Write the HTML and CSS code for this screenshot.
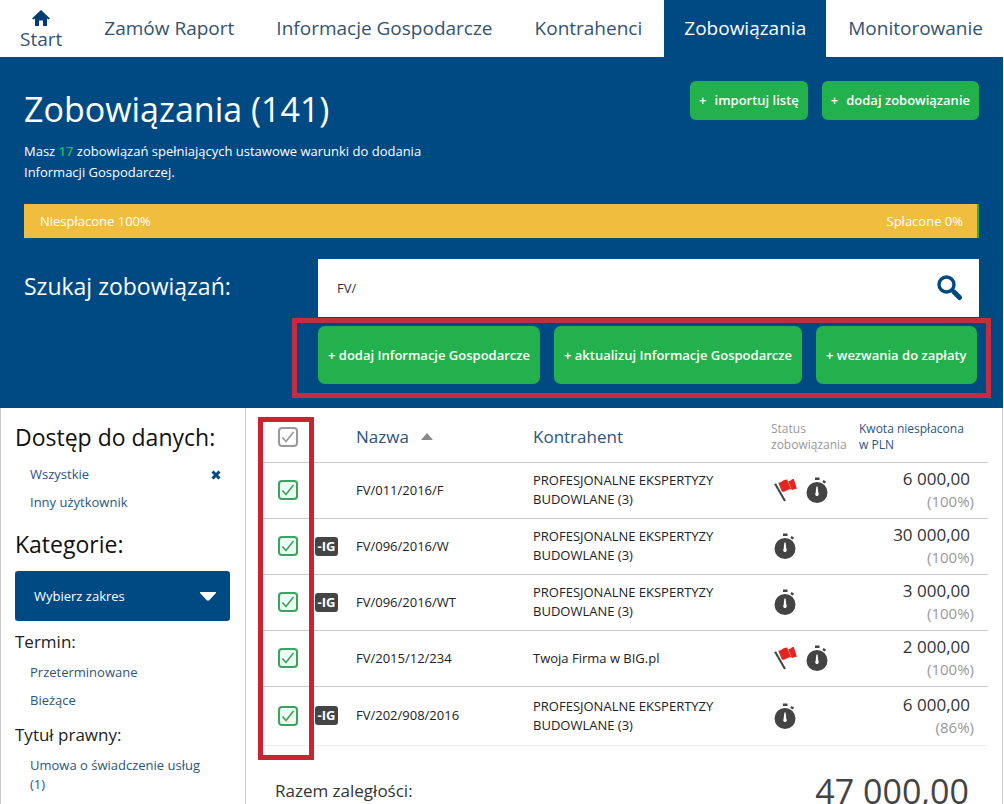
FILE: index.html
```html
<!DOCTYPE html>
<html lang="pl">
<head>
<meta charset="utf-8">
<title>Zobowiązania</title>
<link rel="stylesheet" href="styles.css">
</head>
<body>
<svg class="defs" aria-hidden="true">
  <symbol id="tick" viewBox="0 0 20 20"><path d="M4.5 10.5 8 14.5 15.5 5" fill="none" stroke="currentColor" stroke-width="1.7"/></symbol>
  <symbol id="flag" viewBox="0 0 22 24"><path d="M1 5.500 10.500 22" fill="none" stroke="#444" stroke-width="2"/><path d="M4 4.500C7 5 8 1.500 12.500 1.500L16.500 11C12.500 10 11 14.500 7.500 13Z" fill="#e0261f"/><path d="M13.500 3C16 3.500 17 .5 19 1L22 10.500C20 9.500 18.500 12 16.800 11.300Z" fill="#e0261f"/></symbol>
  <symbol id="watch" viewBox="0 0 22 28"><circle cx="11" cy="16.500" r="10.500" fill="#444"/><path d="M9 1.500h4.500v2.500H9z" fill="#444"/><path d="M17.500 4l2.500 1.500-1.200 2-2.500-1.600z" fill="#444"/><path d="M10.400 10.500h1.200l.8 6.500a1.800 1.800 0 1 1-2.800 0z" fill="#fff"/></symbol>
</svg>
<div class="page">
  <nav class="nav">
    <a class="nav-item home" href="#"><svg width="18" height="17" viewBox="0 0 18 17" aria-hidden="true"><path d="M9 0 18 8.500 16.500 9.500 15 8.500V16H11V10.500H7V16H3V8.500L1.500 9.500 0 8.500Z" fill="#003d73"/></svg><span>Start</span></a>
    <a class="nav-item" href="#">Zamów Raport</a>
    <a class="nav-item" href="#">Informacje Gospodarcze</a>
    <a class="nav-item" href="#">Kontrahenci</a>
    <a class="nav-item active" href="#">Zobowiązania</a>
    <a class="nav-item" href="#">Monitorowanie</a>
  </nav>
  <header class="hero">
    <div class="hero-top">
      <div>
        <h1>Zobowiązania (141)</h1>
        <p class="intro">Masz <b>17</b> zobowiązań spełniających ustawowe warunki do dodania Informacji Gospodarczej.</p>
      </div>
      <div class="hero-actions">
        <button class="btn" type="button"><span>+</span><span>importuj listę</span></button>
        <button class="btn" type="button"><span>+</span><span>dodaj zobowiązanie</span></button>
      </div>
    </div>
    <div class="progress"><span>Niespłacone 100%</span><span>Spłacone 0%</span></div>
    <div class="search">
      <label for="q">Szukaj zobowiązań:</label>
      <div class="search-main">
        <div class="search-box">
          <input id="q" type="text" value="FV/">
          <button class="search-btn" type="button" aria-label="Szukaj"><svg width="26" height="26" viewBox="0 0 26 26" aria-hidden="true"><circle cx="9.500" cy="9.500" r="7.500" fill="none" stroke="#004a80" stroke-width="3.400"/><path d="M14.500 15 16 16.500" stroke="#004a80" stroke-width="3"/><path d="M17 17 22.500 22.500" stroke="#004a80" stroke-width="5" stroke-linecap="round"/></svg></button>
        </div>
        <div class="bulk">
          <button class="btn tall" type="button">+ dodaj Informacje Gospodarcze</button>
          <button class="btn tall" type="button">+ aktualizuj Informacje Gospodarcze</button>
          <button class="btn tall" type="button">+ wezwania do zapłaty</button>
          <div class="mark mark-bulk"></div>
        </div>
      </div>
    </div>
  </header>
  <div class="body">
    <aside class="side">
      <h2>Dostęp do danych:</h2>
      <ul>
        <li><a href="#">Wszystkie</a><button class="clear" type="button" aria-label="Usuń"><svg width="10" height="10" viewBox="0 0 10 10" aria-hidden="true"><path d="M1.500 1.500 8.500 8.500M8.500 1.500 1.500 8.500" stroke="#004a80" stroke-width="3"/></svg></button></li>
        <li><a href="#">Inny użytkownik</a></li>
      </ul>
      <h2>Kategorie:</h2>
      <button class="range" type="button"><span>Wybierz zakres</span><svg width="16" height="9" viewBox="0 0 16 9" aria-hidden="true"><path d="M0 0H16V1L9 8.500H7L0 1Z" fill="#fff"/></svg></button>
      <h3>Termin:</h3>
      <ul>
        <li><a href="#">Przeterminowane</a></li>
        <li><a href="#">Bieżące</a></li>
      </ul>
      <h3>Tytuł prawny:</h3>
      <ul>
        <li><a href="#">Umowa o świadczenie usług (1)</a></li>
      </ul>
    </aside>
    <main class="main">
      <div class="mark mark-checks"></div>
      <table>
        <colgroup><col class="c-check"><col class="c-ig"><col class="c-name"><col><col class="c-status"><col class="c-sum"></colgroup>
        <thead><tr>
          <th><label class="check all"><input type="checkbox" checked aria-label="Zaznacz wszystkie"><svg><use href="#tick"/></svg></label></th>
          <th></th>
          <th class="big">Nazwa <svg class="sort" width="12" height="7" viewBox="0 0 12 7" aria-hidden="true"><path d="M0 7 6 0 12 7Z" fill="#888"/></svg></th>
          <th class="big">Kontrahent</th>
          <th class="muted">Status zobowiązania</th>
          <th class="sum-head">Kwota niespłacona w&nbsp;PLN</th>
        </tr></thead>
        <tbody>
          <tr><td><label class="check"><input type="checkbox" checked aria-label="FV/011/2016/F"><svg><use href="#tick"/></svg></label></td><td></td><td>FV/011/2016/F</td><td>PROFESJONALNE EKSPERTYZY<br>BUDOWLANE (3)</td><td><div class="icons"><svg class="flag"><use href="#flag"/></svg><svg class="watch"><use href="#watch"/></svg></div></td><td class="sum"><b>6 000,00</b><span>(100%)</span></td></tr>
          <tr><td><label class="check"><input type="checkbox" checked aria-label="FV/096/2016/W"><svg><use href="#tick"/></svg></label></td><td><span class="ig">-IG</span></td><td>FV/096/2016/W</td><td>PROFESJONALNE EKSPERTYZY<br>BUDOWLANE (3)</td><td><div class="icons"><svg class="watch"><use href="#watch"/></svg></div></td><td class="sum"><b>30 000,00</b><span>(100%)</span></td></tr>
          <tr><td><label class="check"><input type="checkbox" checked aria-label="FV/096/2016/WT"><svg><use href="#tick"/></svg></label></td><td><span class="ig">-IG</span></td><td>FV/096/2016/WT</td><td>PROFESJONALNE EKSPERTYZY<br>BUDOWLANE (3)</td><td><div class="icons"><svg class="watch"><use href="#watch"/></svg></div></td><td class="sum"><b>3 000,00</b><span>(100%)</span></td></tr>
          <tr><td><label class="check"><input type="checkbox" checked aria-label="FV/2015/12/234"><svg><use href="#tick"/></svg></label></td><td></td><td>FV/2015/12/234</td><td>Twoja Firma w BIG.pl</td><td><div class="icons"><svg class="flag"><use href="#flag"/></svg><svg class="watch"><use href="#watch"/></svg></div></td><td class="sum"><b>2 000,00</b><span>(100%)</span></td></tr>
          <tr><td><label class="check"><input type="checkbox" checked aria-label="FV/202/908/2016"><svg><use href="#tick"/></svg></label></td><td><span class="ig">-IG</span></td><td>FV/202/908/2016</td><td>PROFESJONALNE EKSPERTYZY<br>BUDOWLANE (3)</td><td><div class="icons"><svg class="watch"><use href="#watch"/></svg></div></td><td class="sum"><b>6 000,00</b><span>(86%)</span></td></tr>
        </tbody>
      </table>
      <div class="total"><span>Razem zaległości:</span><strong>47 000,00</strong></div>
    </main>
  </div>
</div>
</body>
</html>
```
FILE: styles.css
```css
* { box-sizing: border-box; }
body { margin: 0; background: #fff; color: #333; font: 13px/19px "Open Sans", "Noto Sans", sans-serif; }
a { color: #2b5580; text-decoration: none; }
button, input { font: inherit; margin: 0; }
button { border: 0; cursor: pointer; }
h1, h2, h3, p, ul { margin: 0; padding: 0; font-weight: 400; }
ul { list-style: none; }
.defs { display: none; }
.page { margin-right: 1px; }

.nav { display: flex; justify-content: space-between; height: 57px; }
.nav-item { display: flex; align-items: center; padding: 0 20px 2px; font-size: 19px; line-height: 24px; color: #33536f; }
.nav-item.home { flex-direction: column; justify-content: center; padding: 3px 20px 0; }
.nav-item.active { background: #004a84; color: #fff; }

.hero { background: #004a84; color: #fff; padding: 24px; }
.hero-top { display: flex; justify-content: space-between; align-items: flex-start; }
h1 { font-size: 34px; line-height: 56px; }
.intro { max-width: 440px; margin-top: 4px; line-height: 21px; }
.intro b { color: #2cb34a; font-weight: 600; }
.hero-actions { display: flex; gap: 14px; }
.btn { background: #22b14c; color: #fff; border-radius: 6px; padding: 0 9px; height: 39px; display: flex; align-items: center; justify-content: center; gap: 8px; white-space: nowrap; font-weight: 600; }
.btn.tall { height: 58px; padding: 0 10px; border-radius: 7px; }
.progress { display: flex; justify-content: space-between; align-items: center; height: 34px; margin-top: 21px; padding: 0 14px 0 16px; background: #f0bd3f; border-right: 2px solid #22b14c; }
.search { display: flex; margin-top: 21px; }
.search label { width: 294px; flex: none; font-size: 23px; line-height: 54px; }
.search-main { flex: 1; }
.search-box { display: flex; height: 58px; background: #fff; }
.search-box input { flex: 1; min-width: 0; border: 0; background: none; padding: 0 19px; color: #333; outline: 0; }
.search-btn { background: none; padding: 0 16px 0 0; display: flex; align-items: center; }
.bulk { position: relative; display: flex; gap: 14px; margin-top: 9px; }
.mark { position: absolute; border: 5px solid #cc2330; pointer-events: none; }
.mark-bulk { inset: -8px -12px -14px -26px; border-color: #c42c42; }

.body { display: flex; border: solid #ccc; border-width: 0 1px; }
.side { width: 245px; flex: none; border-right: 1px solid #ccc; padding: 13px 15px 0 14px; }
h2 { font-size: 23px; line-height: 32px; color: #111; }
.side li { display: flex; justify-content: space-between; align-items: center; padding: 0 9px 0 15px; margin-bottom: 9px; }
.side ul { padding-top: 12px; }
.side ul + h2 { margin-top: 16px; }
.clear { background: none; padding: 0; display: flex; }
.range { display: flex; justify-content: space-between; align-items: center; width: 100%; height: 50px; margin-top: 11px; padding: 0 14px 0 19px; border-radius: 3px; background: #004a84; color: #fff; }
h3 { font-size: 17px; line-height: 22px; margin-top: 10px; color: #222; }
.side ul + h3 { margin-top: 14px; }
.side h3 + ul { padding-top: 10px; }
.side h3 + ul a { max-width: 180px; }

.main { flex: 1; position: relative; padding: 0 14px 0 12px; }
.mark-checks { top: 9px; left: 12px; width: 56px; height: 343px; }
table { width: 100%; border-collapse: collapse; table-layout: fixed; }
.c-check { width: 56px; }
.c-ig { width: 42px; }
.c-name { width: 177px; }
.c-status { width: 88px; }
.c-sum { width: 129px; }
th, td { padding: 0; text-align: left; font-weight: 400; border-bottom: 1px solid #ccc; }
th { height: 54px; padding-top: 4px; }
td { height: 56px; color: #222; }
tbody tr:last-child td { height: 59px; border-color: #eee; }
.big { font-size: 17px; color: #2b5580; }
.sort { margin: 0 0 3px 8px; }
.muted, .sum-head { font-size: 12px; line-height: 16px; }
.muted { color: #999; }
.sum-head { color: #2b5580; padding-right: 20px; }
.check { display: grid; width: 20px; height: 20px; margin-left: 20px; color: #3aa45c; }
.check input, .check svg { grid-area: 1 / 1; width: 20px; height: 20px; }
.check input { appearance: none; color: inherit; border: 2px solid currentColor; border-radius: 4px; background: #f0fff3; }
.check svg { pointer-events: none; }
.all { color: #999; }
.all input { background: #fff; }
.ig { display: block; width: 23px; height: 19px; margin-left: 1px; border-radius: 3px; background: #444; color: #fff; font-weight: 700; font-size: 13px; line-height: 19px; text-align: center; }
.icons { display: flex; align-items: center; gap: 9px; padding-left: 3px; }
.flag { width: 23px; height: 25px; }
.watch { width: 22px; height: 28px; }
.sum { text-align: right; padding-right: 14px; }
.sum b, .sum span { display: block; line-height: 22px; }
.sum b { font-size: 17px; font-weight: 500; padding-right: 4px; color: #333; }
.sum span { font-size: 15px; color: #999; }
.total { display: flex; justify-content: space-between; align-items: center; padding: 20px 19px 0 17px; color: #333; }
.total span { font-size: 17px; line-height: 24px; }
.total strong { font-size: 34px; line-height: 50px; font-weight: 400; color: #444; }
```
